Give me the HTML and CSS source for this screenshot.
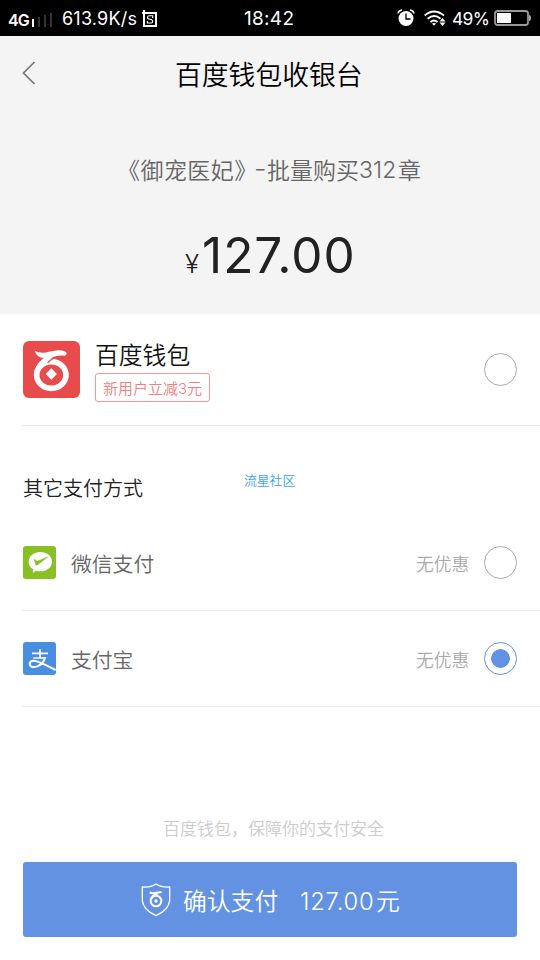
FILE: index.html
```html
<!DOCTYPE html>
<html lang="zh-CN">
<head>
<meta charset="utf-8">
<title>百度钱包收银台</title>
<link rel="stylesheet" href="styles.css">
</head>
<body>
<div class="status">
  <span class="net">4G</span>
  <svg class="bars" width="20" height="14" viewBox="0 0 20 14"><path fill="#fff" d="M0 6h2v8H0z"/><path fill="#333" d="M6 4h2v10H6zM12 2h2v12h-2zM18 0h2v14h-2z"/></svg>
  <span class="speed">613.9K/s</span>
  <svg class="sbox" width="16" height="18" viewBox="0 0 16 18"><path d="M2 0v16h12V3H0" fill="none" stroke="#fff" stroke-width="2"/><path d="M10.700 8V5.800H7.200Q5.500 5.800 5.500 7.500Q5.500 9 8 9.300Q10.700 9.700 10.700 11.400Q10.700 13 9 13H5.300V11" fill="none" stroke="#fff" stroke-width="1.100"/></svg>
  <span class="clock">18:42</span>
  <svg class="alarm" width="18" height="18" viewBox="0 0 18 18"><circle cx="9" cy="9.500" r="7.500" fill="#fff"/><path d="M1 4.500Q1.500 1.500 5 1M17 4.500Q16.500 1.500 13 1" fill="none" stroke="#fff" stroke-width="1.500"/><path d="M9 4.500V10h4.500" fill="none" stroke="#000" stroke-width="1.300"/></svg>
  <svg class="wifi" width="22" height="17" viewBox="0 0 22 17"><g fill="none" stroke="#fff" stroke-width="1.900"><path d="M.7 5.500Q10 -2.500 20 5.500M3.700 8.700Q10.200 3.300 16.500 8.700M6.500 12Q10 9 13.500 12"/></g><path fill="#fff" d="M8 13.500Q10 12.300 12 13.500L10 15.800zM18.500 8l3 3.500h-6zM18.500 16l3-3.500h-6z"/></svg>
  <span class="percent">49%</span>
  <svg class="battery" width="37" height="16" viewBox="0 0 37 16"><rect x="1" y="1" width="33" height="14" rx="2.500" fill="#000" stroke="#999" stroke-width="1.800"/><path fill="#fff" d="M3 3h14v10H3z"/><path fill="#aaa" d="M35 5q2 0 2 3t-2 3z"/></svg>
</div>
<header class="head">
  <div class="nav">
    <svg class="back" width="14" height="24" viewBox="0 0 14 24"><path d="M12.500 1L1.500 12L12.500 23" fill="none" stroke="#777" stroke-width="1.700"/></svg>
    <h1 class="title">百度钱包收银台</h1>
  </div>
  <div class="item"><span class="book">《御宠医妃》</span><span class="dash">–</span><span>批量购买</span><span class="num">312</span><span>章</span></div>
  <div class="price"><span class="yen">¥</span><span class="sum">127.00</span></div>
</header>
<main>
  <section class="wallet">
    <svg class="logo" width="57" height="57" viewBox="0 0 171 171"><rect width="171" height="171" rx="18" fill="#e84b4b"/><ellipse cx="85" cy="102" rx="44" ry="40" fill="none" stroke="#fff" stroke-width="17"/><path fill="none" stroke="#e84b4b" stroke-width="4" d="M128 47Q104 45 88 54Q80 59 74 65"/><path fill="#fff" d="M35 29Q47 36 64 35Q86 31 105 28Q124 27 131 36Q132 43 125 44Q98 42 85 52Q70 62 60 76L34 99Q34 73 62 51Q42 50 35 29zM85 82L102 99L85 116L68 99z"/></svg>
    <div class="info"><div class="name">百度钱包</div><div class="promo">新用户立减<span class="three">3</span>元</div></div>
    <i class="radio"></i>
  </section>
  <div class="other"><h2 class="caption">其它支付方式</h2><span class="mark">流星社区</span></div>
  <section class="method">
    <svg class="icon" width="33" height="33" viewBox="0 0 99 99"><rect width="99" height="99" rx="9" fill="#88c026"/><path fill="#fff" d="M52 18C72 18 87 31 87 47S72 76 52 76Q46 76 40 74L29 80L31 70Q17 62 17 47C17 31 32 18 52 18z"/><path fill="#88c026" d="M32 38L43 45L79 30L43 58Q39 60 37 55z"/></svg>
    <span class="label">微信支付</span><span class="none">无优惠</span><i class="radio"></i>
  </section>
  <section class="method">
    <svg class="icon" width="33" height="33" viewBox="0 0 99 99"><rect width="99" height="99" rx="9" fill="#488fe1"/><g fill="none" stroke="#fff" stroke-width="5"><path d="M27 34H75M51 22V48M31 48H68"/><path d="M67 46Q60 66 43 73C29 78 20 74 20 66C20 56 31 54 44 59Q60 65 98 84" stroke-width="6"/></g></svg>
    <span class="label">支付宝</span><span class="none">无优惠</span><i class="radio on"></i>
  </section>
</main>
<footer>
  <p class="safe">百度钱包，保障你的支付安全</p>
  <div class="pay">
    <svg class="shield" width="30" height="34" viewBox="0 0 90 102"><path d="M45 3Q28 14 4 12V53Q7 81 45 98Q83 81 86 53V12Q62 14 45 3z" fill="none" stroke="#fff" stroke-width="4"/><circle cx="45" cy="54" r="16" fill="none" stroke="#fff" stroke-width="6"/><path d="M26 28Q32 32 41 30L62 27M51 31Q34 36 29 50" fill="none" stroke="#fff" stroke-width="6"/><circle cx="45" cy="54" r="5" fill="#fff"/></svg>
    <span class="confirm">确认支付</span><span class="amount"><span class="digits">127.00</span>元</span>
  </div>
</footer>
</body>
</html>
```
FILE: styles.css
```css
* { box-sizing: border-box; }
body { margin: 0; width: 540px; height: 960px; background: #fff; overflow: hidden; font-family: "Noto Sans CJK SC", sans-serif; font-weight: 350; white-space: nowrap; }
h1, h2, p { margin: 0; font-weight: inherit; }
svg, .radio { display: block; flex: none; }
.status { height: 36px; background: #000; color: #fff; display: flex; align-items: center; font: 400 18px/36px Inter, sans-serif; }
.net { width: 24px; margin-left: 8px; font-size: 16px; font-weight: 600; letter-spacing: -1px; padding-top: 3px; }
.bars { margin-top: 4px; }
.speed { margin-left: 10px; width: 80px; letter-spacing: .2px; padding-top: 1px; }
.sbox { margin-top: 1px; }
.clock { width: 52px; margin-left: 86px; font-size: 19px; letter-spacing: .3px; padding-top: 1px; }
.alarm { margin-left: 101px; }
.wifi { margin-left: 9px; margin-top: 1px; }
.percent { margin-left: 6px; width: 42px; font-size: 17.500px; letter-spacing: -.7px; padding-top: 1px; }
.head { height: 278px; background: #f4f4f4; color: #666; }
.nav { height: 74px; display: flex; align-items: center; color: #000; }
.back { margin-left: 22px; }
.title { margin-left: 139px; font-size: 26.8px; line-height: 40px; padding-top: 1px; }
.item { height: 34px; margin-top: 42px; padding-left: 117px; display: flex; align-items: center; font-size: 23px; line-height: 34px; }
.book { width: 139px; letter-spacing: .45px; }
.dash { width: 11px; font-family: Inter, sans-serif; font-size: 17px; font-weight: 500; }
.num { width: 39px; font-family: Inter, sans-serif; letter-spacing: .1px; padding-top: 2px; }
.price { display: flex; align-items: baseline; margin-top: 39px; padding-left: 185px; font-family: Inter, sans-serif; line-height: 60px; color: #222; }
.yen { width: 17px; font-size: 26px; }
.sum { font-size: 49.500px; font-weight: 370; letter-spacing: 1px; }
.wallet { height: 112px; margin-left: 22px; padding: 27px 23px 0 1px; border-bottom: 1px solid #ececec; display: flex; }
.info { margin-left: 15px; flex: 1; display: flex; flex-direction: column; align-items: flex-start; }
.name { font-size: 23.8px; line-height: 26px; height: 32px; color: #111; }
.promo { width: 115px; height: 29px; border: 1px solid #f19a9a; border-radius: 3px; color: #f08080; font-size: 15px; line-height: 27px; text-align: center; }
.three { font-family: Inter, sans-serif; }
.radio { width: 33px; height: 33px; border: 1px solid #aaa; border-radius: 50%; }
.wallet .radio { margin-top: 12px; }
.radio.on { border-color: #6392e2; background: radial-gradient(circle, #6392e2 9px, transparent 9.6px); }
.other { height: 88px; display: flex; padding: 44px 0 0 23px; }
.caption { width: 221px; color: #222; font-size: 20px; line-height: 36px; }
.mark { color: #38a5ed; font-size: 12.8px; line-height: 20px; }
.method { height: 97px; margin-left: 22px; padding: 0 23px 0 1px; border-bottom: 1px solid #ececec; display: flex; align-items: center; }
.method + .method { height: 96px; }
.label { flex: 1; margin-left: 15px; color: #666; font-size: 20.8px; line-height: 32px; padding-top: 1px; }
.none { width: 68px; color: #aaa; font-size: 17.800px; padding-top: 1px; }
footer { padding: 107px 23px 0; }
.safe { height: 48px; padding-left: 140px; font-size: 17px; line-height: 28px; color: #ccc; }
.pay { height: 75px; border-radius: 3px; background: #6392e2; color: #fff; display: flex; align-items: center; padding-left: 118px; font-size: 23.8px; }
.confirm { margin-left: 12px; width: 117px; }
.amount { display: flex; align-items: center; }
.digits { width: 76px; font-family: Inter, sans-serif; letter-spacing: .8px; padding-top: 3px; }
```
